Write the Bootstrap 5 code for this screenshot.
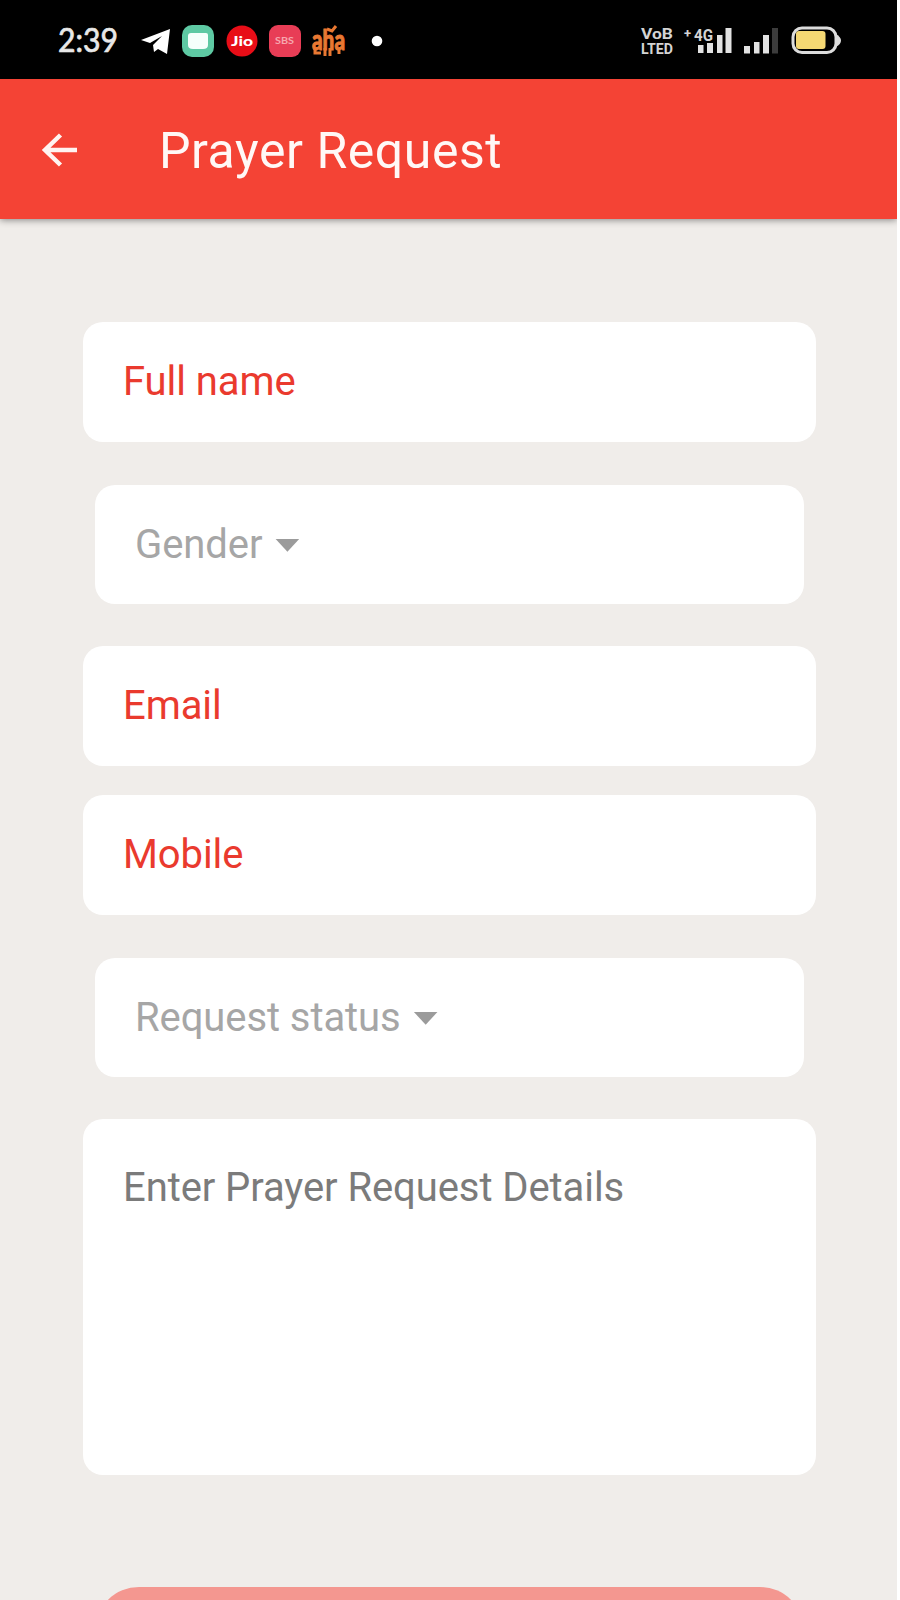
<!DOCTYPE html>
<html lang="en">
<head>
<meta charset="utf-8">
<meta name="viewport" content="width=device-width, initial-scale=1">
<title>Prayer Request</title>
<link href="https://cdn.jsdelivr.net/npm/bootstrap@5.3.0/dist/css/bootstrap.min.css" rel="stylesheet">
<style>
  body { font-family: Roboto, "Liberation Sans", sans-serif; background: #fff; height: 1600px; overflow: hidden; }
  .screen { width: 897px; height: 1600px; background: #f0edea; }
  .statusbar { height: 79px; background: #000; }
  .statusbar svg { display: block; }
  .appbar { height: 140px; background: #f44335; padding: 0 0 0 41px; box-shadow: 0 1px 7px rgba(0,0,0,.45); --bs-navbar-padding-y: 0; }
  .back { width: 38px; height: 36px; margin-right: 80px; }
  .title { font-size: 50px; line-height: 60px; color: #fff8f6; letter-spacing: .55px; padding-top: 4px; }
  .prayer-form { padding: 103px 81px 0 83px; }
  .field { height: 119.5px; border: 0; border-radius: 20px; background: #fff; padding: 1px 40px 0; font-size: 40px; line-height: 48px; letter-spacing: -.08px; color: #ea3a2e; }
  .picker { margin: 43px 12px 42px; padding-top: 2px; color: #a6a6a6; }
  .gap-field { margin-bottom: 29.5px; }
  .picker .caret { width: 24px; height: 13px; margin-left: 13px; background: #9b9b9b; clip-path: polygon(0 0, 100% 0, 50% 100%); }
  .details { height: 356px; padding-top: 45px; color: #7b7b7b; }
  .submit { height: 108px; margin: 112px 12px 0; border: 0; border-radius: 44px; background: #f49790; }
</style>
</head>
<body>
<div class="screen overflow-hidden">
  <div class="statusbar">
    <svg width="897" height="79" viewBox="0 0 897 79" font-family="Lato, sans-serif">
      <text x="58" y="52" font-size="32" fill="#e8e8e8" stroke="#e8e8e8" stroke-width=".7" textLength="60" lengthAdjust="spacingAndGlyphs">2:39</text>
      <path fill="#fff" d="M141 40 170 29 167 54 158 49 154 52 153 45 162 36 150 43Z"/>
      <rect x="182" y="25" width="32" height="32" rx="10" fill="#5ec9a3"/>
      <path fill="#f5fffb" d="M191 33h15q2 0 2 2v10q0 4-5 4h-10q-5 0-5-4v-9q0-3 3-3z"/>
      <circle cx="242" cy="41" r="15.500" fill="#e80d17"/>
      <text x="231" y="46" font-size="14" font-weight="900" fill="#fff" textLength="22" lengthAdjust="spacingAndGlyphs">Jio</text>
      <rect x="269" y="25" width="32" height="32" rx="9" fill="#e83d56"/>
      <text x="275" y="44" font-size="9" font-weight="700" fill="#f6a7ae" textLength="19" lengthAdjust="spacingAndGlyphs">SBS</text>
      <text x="312" y="50" font-size="29" font-weight="900" fill="#e97832" stroke="#e97832" textLength="33" lengthAdjust="spacingAndGlyphs">aha</text>
      <g fill="none" stroke="#e97832" stroke-width="3"><path d="M327 29l5 2 4-5M315 48v5h6M325 48v8M330 48v8M339 48v6"/></g>
      <circle cx="377" cy="41" r="5.300" fill="#fff"/>
      <g fill="#d4d4d4" font-family="Roboto, sans-serif" font-weight="700" font-size="15">
        <text x="641" y="39" textLength="32" lengthAdjust="spacingAndGlyphs">VoB</text>
        <text x="641" y="53.500" textLength="32" lengthAdjust="spacingAndGlyphs">LTED</text>
        <text x="684" y="38" font-size="13">+</text>
        <text x="694" y="41" font-size="16" textLength="19" lengthAdjust="spacingAndGlyphs">4G</text>
      </g>
      <g fill="#e2e2e2">
        <rect x="698" y="45" width="5.500" height="8"/><rect x="707" y="43" width="6" height="10"/>
        <rect x="717" y="35" width="5.500" height="18"/><rect x="725.500" y="28" width="6" height="25"/>
        <rect x="744" y="46" width="6" height="7.500"/><rect x="754" y="42" width="5.500" height="11.500"/>
        <rect x="763" y="35" width="6" height="18.500"/><rect x="772" y="28" width="6" height="25.500" fill="#3c3c3c"/>
      </g>
      <rect x="793" y="28" width="43" height="24.500" rx="9" fill="none" stroke="#dcdcdc" stroke-width="3"/>
      <path d="M836 34q5 3 5 6.500t-5 6.500z" fill="#dcdcdc"/>
      <rect x="796" y="31" width="29.500" height="18" rx="3" fill="#f5d873"/>
    </svg>
  </div>
  <nav class="navbar appbar justify-content-start position-relative">
    <svg class="back" viewBox="0 0 38 36" fill="none" stroke="#fff4f1" stroke-width="4.500"><path d="M36 19H4M19.500 4 4 19 19.500 34"/></svg>
    <span class="title">Prayer Request</span>
  </nav>
  <form class="prayer-form">
    <div class="card field justify-content-center">Full name</div>
    <div class="card field picker flex-row align-items-center"><span>Gender</span><span class="caret"></span></div>
    <div class="card field gap-field justify-content-center">Email</div>
    <div class="card field justify-content-center">Mobile</div>
    <div class="card field picker flex-row align-items-center"><span>Request status</span><span class="caret"></span></div>
    <div class="card field details">Enter Prayer Request Details</div>
    <div class="submit"></div>
  </form>
</div>
<script src="https://cdn.jsdelivr.net/npm/bootstrap@5.3.0/dist/js/bootstrap.bundle.min.js"></script>
</body>
</html>
